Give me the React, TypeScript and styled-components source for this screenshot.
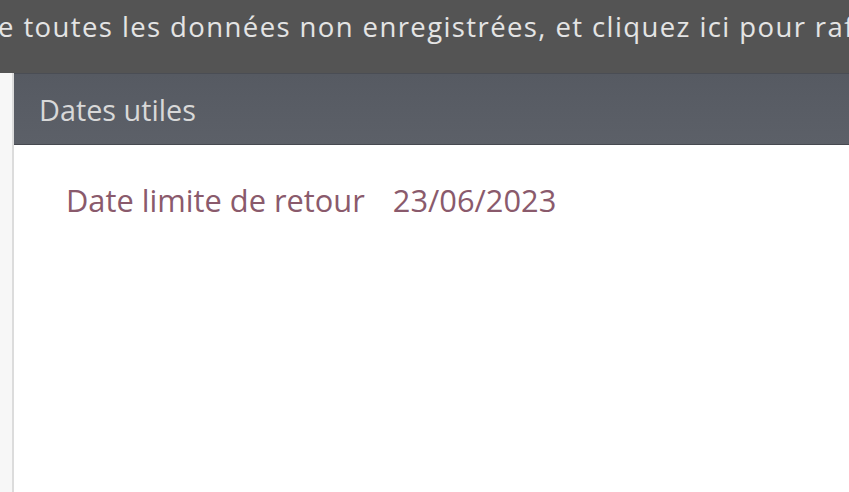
import React from 'react';
import styled, { createGlobalStyle } from 'styled-components';

const GlobalStyle = createGlobalStyle`
  html, body {
    margin: 0;
    padding: 0;
    background: #f7f7f7;
    font-family: "Open Sans", "Liberation Sans", sans-serif;
  }
  #root {
    height: 100vh;
    overflow: hidden;
  }
`;

const Page = styled.div`
  display: flex;
  flex-direction: column;
  height: 100vh;
`;

const Banner = styled.div`
  height: 73px;
  background: #545454;
  overflow: hidden;
  white-space: nowrap;
  flex-shrink: 0;
`;

const BannerText = styled.div`
  color: #e4e4e4;
  font-size: 27.5px;
  letter-spacing: 1.4px;
  line-height: 1;
  padding-top: 13px;
  text-indent: -2px;
`;

const Content = styled.div`
  flex: 1;
  display: flex;
  padding-left: 12px;
`;

const Panel = styled.section`
  flex: 1;
  display: flex;
  flex-direction: column;
  background: #fff;
  border-left: 2px solid #dcdcdc;
`;

const PanelHeader = styled.div`
  height: 72px;
  box-sizing: border-box;
  display: flex;
  align-items: center;
  padding-left: 25px;
  background: linear-gradient(#565a62, #5c6068);
  border-top: 1px solid #4a4d54;
  border-bottom: 1px solid #464950;
  color: #d8d8d8;
  font-size: 28.8px;
`;

const PanelBody = styled.div`
  padding: 40px 52px;
`;

const Row = styled.div`
  display: flex;
  gap: 28px;
  color: #8a5a6c;
  font-size: 30.8px;
  line-height: 1;
`;

export default function App() {
  return (
    <Page>
      <GlobalStyle />
      <Banner>
        <BannerText>
          e toutes les données non enregistrées, et cliquez ici pour rafraîchir la page
        </BannerText>
      </Banner>
      <Content>
        <Panel>
          <PanelHeader>Dates utiles</PanelHeader>
          <PanelBody>
            <Row>
              <span>Date limite de retour</span>
              <span>23/06/2023</span>
            </Row>
          </PanelBody>
        </Panel>
      </Content>
    </Page>
  );
}
